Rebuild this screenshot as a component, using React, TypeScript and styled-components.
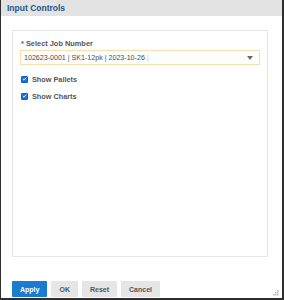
import React from "react";
import styled, { createGlobalStyle } from "styled-components";

const Global = createGlobalStyle`
  html, body { margin: 0; padding: 0; background: #ffffff; }
  body { font-family: "Liberation Sans", Arial, sans-serif; }
`;

const Dialog = styled.div`
  box-sizing: border-box;
  width: 284px;
  height: 300px;
  display: flex;
  flex-direction: column;
  background: #ffffff;
  border-left: 1px solid #2e2e2e;
  border-right: 2px solid #2e2e2e;
  border-bottom: 2px solid #2e2e2e;
  position: relative;
`;

const Header = styled.div`
  height: 16px;
  flex: 0 0 16px;
  background: #e3e3e3;
  display: flex;
  align-items: center;
  padding-left: 6px;
  font-size: 8.5px;
  font-weight: bold;
  color: #1d5592;
`;

const Body = styled.div`
  flex: 1;
  display: flex;
  flex-direction: column;
  padding: 14px 14px 0 11px;
`;

const Panel = styled.div`
  box-sizing: border-box;
  width: 256px;
  height: 227px;
  border: 1px solid #e6e6e6;
  padding: 8px 6px 0 7px;
  display: flex;
  flex-direction: column;
`;

const Label = styled.div`
  font-size: 7.4px;
  font-weight: bold;
  color: #555555;
  line-height: 9px;
  padding-left: 1px;
`;

const Select = styled.div`
  box-sizing: border-box;
  margin-top: 2px;
  width: 240px;
  height: 15px;
  border: 1px solid #f9dfb0;
  display: flex;
  align-items: center;
  justify-content: space-between;
  padding: 0 6px 0 3px;
  font-size: 7.1px;
  color: #4a4a4a;
`;

const Caret = styled.span`
  color: #a9c9ec;
`;

const Arrow = styled.svg`
  width: 6px;
  height: 4px;
  display: block;
`;

const CheckRow = styled.label<{ $first?: boolean }>`
  display: flex;
  align-items: center;
  gap: 4px;
  margin-top: ${(p) => (p.$first ? "9px" : "7px")};
  padding-left: 1px;
  font-size: 7.3px;
  font-weight: bold;
  color: #555555;
  height: 10px;
`;

const Box = styled.span`
  box-sizing: border-box;
  width: 7px;
  height: 7px;
  border-radius: 1px;
  background: #1a73d9;
  border: 0.5px solid #0f5fb8;
  display: flex;
  align-items: center;
  justify-content: center;
`;

const Footer = styled.div`
  display: flex;
  gap: 4px;
  margin-top: 24px;
`;

const Button = styled.button<{ $primary?: boolean }>`
  box-sizing: border-box;
  height: 16px;
  padding: 0 8px;
  border: none;
  border-radius: 1px;
  font-family: "Liberation Sans", Arial, sans-serif;
  font-size: 7px;
  font-weight: bold;
  background: ${(p) => (p.$primary ? "#1a7bcf" : "#e6e6e6")};
  color: ${(p) => (p.$primary ? "#ffffff" : "#555555")};
`;

const Grip = styled.svg`
  position: absolute;
  right: 3px;
  bottom: 2px;
  width: 6px;
  height: 6px;
`;

function Check({ label, first }: { label: string; first?: boolean }) {
  return (
    <CheckRow $first={first}>
      <Box>
        <svg width="6" height="6" viewBox="0 0 6 6">
          <path d="M1 3 L2.4 4.4 L5 1.4" stroke="#fff" strokeWidth="1.1" fill="none" />
        </svg>
      </Box>
      {label}
    </CheckRow>
  );
}

export default function App() {
  return (
    <>
      <Global />
      <Dialog>
        <Header>Input Controls</Header>
        <Body>
          <Panel>
            <Label>* Select Job Number</Label>
            <Select>
              <span>
                102623-0001 | SK1-12pk | 2023-10-26 <Caret>|</Caret>
              </span>
              <Arrow viewBox="0 0 6 4">
                <path d="M0 0 H6 L3 4 Z" fill="#6b6b6b" />
              </Arrow>
            </Select>
            <Check label="Show Pallets" first />
            <Check label="Show Charts" />
          </Panel>
          <Footer>
            <Button $primary>Apply</Button>
            <Button>OK</Button>
            <Button>Reset</Button>
            <Button>Cancel</Button>
          </Footer>
        </Body>
        <Grip viewBox="0 0 6 6">
          <rect x="4" y="0" width="1.5" height="1.5" fill="#bdbdbd" />
          <rect x="2" y="2" width="1.5" height="1.5" fill="#bdbdbd" />
          <rect x="4" y="2" width="1.5" height="1.5" fill="#bdbdbd" />
          <rect x="0" y="4" width="1.5" height="1.5" fill="#bdbdbd" />
          <rect x="2" y="4" width="1.5" height="1.5" fill="#bdbdbd" />
          <rect x="4" y="4" width="1.5" height="1.5" fill="#bdbdbd" />
        </Grip>
      </Dialog>
    </>
  );
}
